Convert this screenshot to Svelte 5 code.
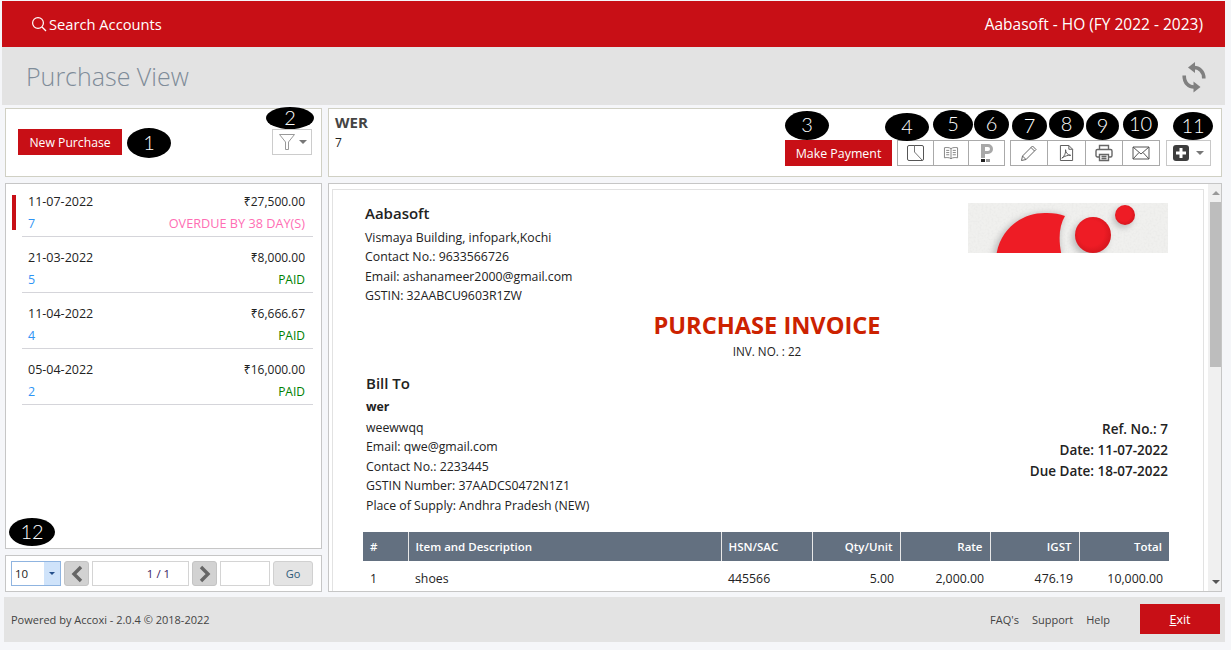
<script>
  const purchases = [
    { date: '11-07-2022', amount: '₹27,500.00', no: '7', status: 'OVERDUE BY 38 DAY(S)', kind: 'overdue', active: true },
    { date: '21-03-2022', amount: '₹8,000.00', no: '5', status: 'PAID', kind: 'paid' },
    { date: '11-04-2022', amount: '₹6,666.67', no: '4', status: 'PAID', kind: 'paid' },
    { date: '05-04-2022', amount: '₹16,000.00', no: '2', status: 'PAID', kind: 'paid' }
  ];
</script>

<div class="page">
  <header class="topbar">
    <div class="search">
      <svg width="16" height="16" viewBox="0 0 16 16" fill="none" stroke="#fff" stroke-width="1.2"><circle cx="7" cy="7" r="5.4" /><path d="M11 11l4 4" /></svg>
      <span>Search Accounts</span>
    </div>
    <div class="company">Aabasoft - HO (FY 2022 - 2023)</div>
  </header>

  <div class="titlebar">
    <h1>Purchase View</h1>
    <svg width="24" height="34" viewBox="0 0 24 34" fill="none">
      <path d="M11 8.500C17 8 22 12.500 21.800 19.500" stroke="#808080" stroke-width="3.600" />
      <path d="M6 8.500l7-5.500v11z" fill="#808080" />
      <path d="M13 28C7 28.500 2 24 2.200 16.500" stroke="#808080" stroke-width="3.600" />
      <path d="M18.500 28l-7-5.500v11z" fill="#808080" />
    </svg>
  </div>

  <div class="workspace">
    <aside class="side">
      <section class="panel side-top">
        <button class="red new-btn">New Purchase</button>
        <span class="mark m1">1</span>
        <span class="mark m2">2</span>
        <button class="filter">
          <svg width="18" height="18" viewBox="0 0 18 18" fill="none" stroke="#999"><path d="M1.500 1.500h15L10.500 9v7.500h-3V9z" /></svg>
          <i class="caret"></i>
        </button>
      </section>

      <section class="panel list">
        {#each purchases as p, i}
          <div class="row" class:first={i === 0} class:active={p.active}>
            <div class="line"><span class="date">{p.date}</span><span>{p.amount}</span></div>
            <div class="line"><span class="no">{p.no}</span><span class={p.kind}>{p.status}</span></div>
          </div>
        {/each}
        <span class="mark m12">12</span>
      </section>

      <section class="panel pager">
        <div class="size"><span>10</span><b><i class="caret small"></i></b></div>
        <button class="nav"><svg width="14" height="18" viewBox="0 0 14 18" fill="none" stroke="#666" stroke-width="3.400"><path d="M11 2L4 9l7 7" /></svg></button>
        <div class="count">1 / 1</div>
        <button class="nav"><svg width="14" height="18" viewBox="0 0 14 18" fill="none" stroke="#666" stroke-width="3.400"><path d="M3 2l7 7-7 7" /></svg></button>
        <div class="jump"></div>
        <button class="go">Go</button>
      </section>
    </aside>

    <main class="content">
      <section class="panel head">
        <div class="vendor">
          <strong>WER</strong>
          <span>7</span>
        </div>
        <div class="tools">
          <div class="tool-wrap"><span class="mark m3">3</span><button class="red pay">Make Payment</button></div>
          <div class="group g1">
            <span class="mark m4">4</span><span class="mark m5">5</span><span class="mark m6">6</span>
            <button><svg width="17" height="16" viewBox="0 0 17 16" fill="none" stroke="#555"><rect x=".5" y=".5" width="16" height="15" rx="1.500" /><path d="M7.500 .5v6.500l7.500 8" stroke="#777" /></svg></button>
            <button><svg width="16" height="14" viewBox="0 0 18 16" fill="none" stroke="#777"><path d="M9 3C7 1.500 4 1.500 1.500 2v11.500c2.500-.5 5.500-.5 7.500 1 2-1.500 5-1.500 7.500-1V2C14 1.500 11 1.500 9 3zM9 3v11.500M3.500 5h3.500M3.500 7.500h3.500M3.500 10h3.500M11 5h3.500M11 7.500h3.500M11 10h3.500" /></svg></button>
            <button><svg width="14" height="20" viewBox="0 0 14 20"><path d="M1 1h7a4.500 4.500 0 0 1 0 10H5v4H1zM5 4v4h3a2 2 0 0 0 0-4z" fill="#a8a8a8" fill-rule="evenodd" /><path d="M1 16h4v3H1z" fill="#222" /><path d="M6 16h4v3H6z" fill="#999" /></svg></button>
          </div>
          <div class="group g2">
            <span class="mark m7">7</span><span class="mark m8">8</span><span class="mark m9">9</span><span class="mark m10">10</span>
            <button><svg width="18" height="18" viewBox="0 0 18 18" fill="none" stroke="#666"><path d="M1.500 16.500l1-4.500L12.500 2l3.500 3.500L6 15.500zM2.500 12l3.500 3.500M11 3.500l3.500 3.500" /></svg></button>
            <button><svg width="15" height="18" viewBox="0 0 16 18" fill="none" stroke="#555"><path d="M1.500 1h9l4 4v12h-13zM10.500 1v4h4" /><path d="M3 14.500C6 12.500 7.500 8.500 7 5.500c0 3 2 5.500 5.500 6-3-.3-6 .5-9.500 3z" /></svg></button>
            <button><svg width="18" height="18" viewBox="0 0 18 18" fill="none" stroke="#666" stroke-width="1.400"><path d="M4.500 5.500V1.500h9v4M4.500 13H2.500A1.500 1.500 0 0 1 1 11.500V7a1.500 1.500 0 0 1 1.500-1.500h13A1.500 1.500 0 0 1 17 7v4.500a1.500 1.500 0 0 1-1.500 1.500h-2" /><path d="M4.500 10.500h9v6h-9zM6.500 12.500h5M6.500 14.500h5" /></svg></button>
            <button><svg width="18" height="14" viewBox="0 0 18 14" fill="none" stroke="#555"><path d="M1 1h16v12H1zM1 1l8 7 8-7M1 13l6-6.500M17 13l-6-6.500" /></svg></button>
          </div>
          <button class="more">
            <span class="mark m11">11</span>
            <svg width="16" height="16" viewBox="0 0 16 16"><rect width="16" height="16" rx="3" fill="#3d3d3d" /><path d="M6.500 3h3v3.500H13v3H9.500V13h-3V9.500H3v-3h3.500z" fill="#fff" /></svg>
            <i class="caret"></i>
          </button>
        </div>
      </section>

      <section class="panel viewer">
        <article class="sheet">
          <div class="seller">
            <div>
              <h2>Aabasoft</h2>
              <p>Vismaya Building, infopark,Kochi</p>
              <p>Contact No.: 9633566726</p>
              <p>Email: ashanameer2000@gmail.com</p>
              <p>GSTIN: 32AABCU9603R1ZW</p>
            </div>
            <svg class="logo" width="200" height="50" viewBox="0 0 200 50">
              <defs>
                <radialGradient id="ball" cx="0.45" cy="0.45" r="0.55"><stop offset="0.65" stop-color="#ee1c25" /><stop offset="1" stop-color="#d8161e" /></radialGradient>
                <filter id="paper" x="0" y="0" width="1" height="1">
                  <feTurbulence type="fractalNoise" baseFrequency="0.5" numOctaves="2" seed="4" />
                  <feColorMatrix values="0 0 0 0 0.6  0 0 0 0 0.6  0 0 0 0 0.6  0 0 0 0.35 -0.14" />
                </filter>
                <filter id="soft" x="-30%" y="-30%" width="160%" height="160%"><feGaussianBlur stdDeviation="3" /></filter>
                <clipPath id="logo-box"><rect width="200" height="50" /></clipPath>
              </defs>
              <g clip-path="url(#logo-box)">
                <rect width="200" height="50" fill="#f0f0ee" />
                <rect width="200" height="50" filter="url(#paper)" />
                <circle cx="122" cy="35" r="18" fill="#bbb" filter="url(#soft)" />
                <circle cx="155" cy="15" r="10" fill="#bbb" filter="url(#soft)" />
                <path d="M25 54C29 24 56 9 79 10c7 0 13 1 18 3-6 10-7 24-3 41z" fill="#bbb" filter="url(#soft)" />
                <path d="M28 54C32 24 56 9 79 10c7 0 13 1 18 3-6 10-7 24-3 41z" fill="#ee1c25" />
                <circle cx="125" cy="32" r="18" fill="url(#ball)" />
                <circle cx="157" cy="12" r="10" fill="url(#ball)" />
              </g>
            </svg>
          </div>

          <div class="heading">
            <h3>PURCHASE INVOICE</h3>
            <span>INV. NO. : 22</span>
          </div>

          <div class="billing">
            <div class="bill-to">
              <h2>Bill To</h2>
              <p class="name">wer</p>
              <p>weewwqq</p>
              <p>Email: qwe@gmail.com</p>
              <p>Contact No.: 2233445</p>
              <p>GSTIN Number: 37AADCS0472N1Z1</p>
              <p>Place of Supply: Andhra Pradesh (NEW)</p>
            </div>
            <div class="refs">
              <p>Ref. No.: 7</p>
              <p>Date: 11-07-2022</p>
              <p>Due Date: 18-07-2022</p>
            </div>
          </div>

          <table>
            <thead>
              <tr><th class="c1">#</th><th class="c2">Item and Description</th><th class="c3">HSN/SAC</th><th class="num c4">Qty/Unit</th><th class="num c5">Rate</th><th class="num c6">IGST</th><th class="num c7">Total</th></tr>
            </thead>
            <tbody>
              <tr><td>1</td><td>shoes</td><td>445566</td><td class="num">5.00</td><td class="num">2,000.00</td><td class="num">476.19</td><td class="num">10,000.00</td></tr>
            </tbody>
          </table>
        </article>
        <div class="scrollbar">
          <i class="up"></i>
          <div class="track"><div class="thumb"></div></div>
          <i class="down"></i>
        </div>
      </section>
    </main>
  </div>

  <footer class="foot">
    <span class="powered">Powered by Accoxi - 2.0.4 © 2018-2022</span>
    <nav><span>FAQ's</span><span>Support</span><span>Help</span></nav>
    <button class="exit"><u>E</u>xit</button>
  </footer>
</div>

<style>
  :global(body) {
    background: #f5f6f9;
    font-family: "Open Sans", "Noto Sans", sans-serif;
  }

  .page {
    width: 1231px;
    height: 650px;
    overflow: hidden;
    padding: 1px 6px 0 2px;
    box-sizing: border-box;
    font-size: 12px;
    color: #222;
  }

  button {
    font-family: inherit;
    cursor: pointer;
  }

  .topbar {
    height: 46px;
    background: #c80f16;
    color: #fff;
    display: flex;
    align-items: center;
    justify-content: space-between;
    padding: 0 22px 0 29px;
    font-size: 14.700px;
  }

  .company { font-size: 15.500px; }

  .search {
    display: flex;
    align-items: center;
    gap: 2px;
  }

  .titlebar {
    height: 58px;
    background: #e3e3e3;
    display: flex;
    align-items: center;
    justify-content: space-between;
    padding: 0 19px 0 24px;
  }

  h1 {
    margin: 0;
    font-size: 25px;
    font-weight: 300;
    color: #7f8c99;
  }

  .workspace {
    display: flex;
    gap: 6px;
    padding: 3px 3px 0 3px;
  }

  .panel {
    position: relative;
    background: #fff;
    box-sizing: border-box;
  }

  .side {
    width: 317px;
    display: flex;
    flex-direction: column;
    gap: 6px;
  }

  .side-top {
    height: 69px;
    border: 1px solid #d0d0c4;
    display: flex;
    justify-content: space-between;
    align-items: flex-start;
    padding: 20px 9px 0 12px;
  }

  .red {
    background: #c80f16;
    color: #fff;
    border: 0;
    font-size: 12.200px;
  }

  .new-btn {
    width: 104px;
    height: 26px;
    padding: 0;
  }

  .filter {
    width: 40px;
    height: 26px;
    background: #fff;
    border: 1px solid #ccc;
    display: flex;
    align-items: center;
    justify-content: center;
    gap: 3px;
    padding: 0;
  }

  .caret {
    display: inline-block;
    border-left: 4px solid transparent;
    border-right: 4px solid transparent;
    border-top: 4px solid #777;
  }

  .caret.small {
    border-width: 3px 3px 0;
    border-top-color: #24508c;
  }

  .mark {
    position: absolute;
    background: #000;
    color: #fff;
    border-radius: 50%;
    font-family: Lato, sans-serif;
    font-size: 20px;
    font-weight: 300;
    line-height: 1;
    display: flex;
    align-items: center;
    justify-content: center;
    padding-bottom: 3px;
    box-sizing: border-box;
    z-index: 2;
  }

  .m1 { left: 121px; top: 19px; width: 44px; height: 30px; }
  .m2 { left: 260px; top: -2px; width: 48px; height: 22px; }
  .m3 { left: 0; top: -29px; width: 44px; height: 29px; }
  .m4 { left: -13px; top: -28px; width: 44px; height: 28px; }
  .m5 { left: 35px; top: -31px; width: 40px; height: 29px; }
  .m6 { left: 76px; top: -31px; width: 35px; height: 29px; }
  .m7 { left: 1px; top: -29px; width: 35px; height: 28px; }
  .m8 { left: 38px; top: -31px; width: 35px; height: 28px; }
  .m9 { left: 75px; top: -29px; width: 33px; height: 28px; }
  .m10 { left: 112px; top: -31px; width: 35px; height: 29px; }
  .m11 { left: 6px; top: -29px; width: 40px; height: 28px; }
  .m12 { left: 3px; top: 334px; width: 46px; height: 28px; }

  .list {
    height: 366px;
    border: 1px solid #c6c6c6;
    padding: 0 8px 0 16px;
  }

  .row {
    position: relative;
    height: 56px;
    box-sizing: border-box;
    padding: 9px 8px 0 6px;
    border-bottom: 1px solid #d5d5da;
  }

  .row.first {
    height: 53px;
    padding-top: 6px;
  }

  .row.active::before {
    content: "";
    position: absolute;
    left: -10px;
    top: 11px;
    width: 4px;
    height: 35px;
    background: #c80f16;
  }

  .line {
    display: flex;
    justify-content: space-between;
    align-items: center;
    height: 22px;
  }

  .date { font-size: 12.500px; }
  .no { color: #2f94f5; font-size: 12.500px; }
  .overdue { color: #ff6eb4; font-size: 12.700px; }
  .paid { color: #008000; }

  .pager {
    height: 37px;
    border: 1px solid #c6c6c6;
    display: flex;
    align-items: center;
    gap: 3px;
    padding: 0 7px 0 5px;
  }

  .size {
    width: 50px;
    height: 25px;
    border: 1px solid #8fb4e0;
    box-sizing: border-box;
    display: flex;
    justify-content: space-between;
    align-items: center;
    padding-left: 3px;
    font-size: 11.500px;
  }

  .size b {
    width: 16px;
    height: 23px;
    background: #cfe3fa;
    display: flex;
    align-items: center;
    justify-content: center;
  }

  .nav {
    width: 25px;
    height: 25px;
    padding: 0;
    background: #d2d2d2;
    border: 1px solid #c4c4c4;
    border-radius: 3px;
    display: flex;
    align-items: center;
    justify-content: center;
  }

  .count, .jump {
    height: 25px;
    box-sizing: border-box;
    border: 1px solid #d4d4d4;
    background: #fff;
  }

  .count {
    width: 97px;
    line-height: 24px;
    text-align: center;
    padding-left: 36px;
    font-size: 11.500px;
    color: #3c1a60;
  }

  .jump { width: 50px; }

  .go {
    width: 40px;
    height: 25px;
    padding: 0;
    background: #e4e4e4;
    border: 1px solid #d0d0d0;
    border-radius: 3px;
    color: #2c5a78;
    font-size: 11px;
  }

  .content {
    width: 894px;
    display: flex;
    flex-direction: column;
    gap: 6px;
  }

  .head {
    height: 69px;
    border: 1px solid #d0d0c4;
    display: flex;
    justify-content: space-between;
    padding: 3px 10px 0 6px;
  }

  .vendor {
    display: flex;
    flex-direction: column;
    gap: 2px;
  }

  .vendor strong {
    font-size: 15px;
    color: #444;
  }

  .tools {
    display: flex;
    align-items: flex-start;
    padding-top: 28px;
  }

  .tool-wrap { position: relative; margin-right: 5px; }

  .pay {
    width: 107px;
    height: 26px;
    padding: 0;
    font-size: 12.400px;
    display: block;
  }

  .group {
    position: relative;
    display: flex;
    height: 26px;
    border: 1px solid #aaa;
    box-sizing: border-box;
    margin-right: 5px;
  }

  .group button {
    height: 24px;
    padding: 0;
    background: #fff;
    border: 0;
    border-right: 1px solid #aaa;
    display: flex;
    align-items: center;
    justify-content: center;
  }

  .group button:last-of-type { border-right: 0; }
  .g1 { width: 108px; }
  .g1 button { flex: 1; }
  .g2 { width: 150px; }
  .g2 button { flex: 1; }

  .more {
    position: relative;
    width: 45px;
    height: 26px;
    padding: 0;
    background: #fff;
    border: 1px solid #c8c8c8;
    display: flex;
    align-items: center;
    justify-content: center;
    gap: 7px;
    margin-left: 1px;
  }

  .viewer {
    height: 409px;
    border: 1px solid #c6c6c6;
    display: flex;
    overflow: hidden;
    padding: 5px 0 0 3px;
    gap: 4px;
  }

  .sheet {
    flex: 1;
    height: 600px;
    box-sizing: border-box;
    border: 1px solid #e2e2e2;
    padding: 14px 34px 0 32px;
    font-size: 12.300px;
  }

  .sheet p { margin: 0; line-height: 19.400px; }

  .sheet h2 {
    margin: 0 0 3px;
    font-size: 15px;
    font-weight: 600;
    line-height: 20px;
  }

  .seller h2 { margin: -1px 0 5px; }

  .seller {
    display: flex;
    justify-content: space-between;
    align-items: flex-start;
  }

  .logo { margin: -1px 1px 0 0; }

  .heading {
    text-align: center;
    margin-top: 4px;
  }

  .heading h3 {
    margin: 0;
    font-size: 23.600px;
    line-height: 30px;
    font-weight: 700;
    color: #cc2200;
  }

  .heading span {
    display: block;
    margin-top: 4px;
    font-size: 11.700px;
    line-height: 14px;
  }

  .billing {
    display: flex;
    justify-content: space-between;
    margin-top: 15px;
    padding-left: 1px;
  }

  .sheet .name {
    font-weight: 700;
    line-height: 22.400px;
  }

  .refs {
    text-align: right;
    font-weight: 600;
    font-size: 13.500px;
    padding: 46px 1px 0 0;
  }

  .sheet .refs p { line-height: 21px; }

  table {
    width: 806px;
    margin: 17px 0 0 -2px;
    border-collapse: collapse;
    table-layout: fixed;
  }

  th {
    background: #637080;
    color: #fff;
    font-size: 11.500px;
    font-weight: 600;
    height: 29px;
    text-align: left;
    padding: 0 7px;
    border-right: 1px solid #e8e8e8;
    box-sizing: border-box;
  }

  th:last-child { border-right: 0; }
  td { height: 34px; padding: 0 6px 0 7px; }
  .num { text-align: right; }
  .c1 { width: 45px; }
  .c2 { width: 313px; }
  .c3 { width: 91px; }
  .c4 { width: 88px; }
  .c5 { width: 90px; }
  .c6 { width: 89px; }
  .c7 { width: 90px; }

  .scrollbar {
    width: 16px;
    margin: -5px 1px 0 0;
    height: 407px;
    flex: none;
    background: #f0f0f0;
    display: flex;
    flex-direction: column;
    align-items: center;
  }

  .up, .down {
    display: block;
    height: 0;
    margin: 7px 0;
    border-left: 4px solid transparent;
    border-right: 4px solid transparent;
  }

  .up { border-bottom: 4px solid #999; }
  .down { border-top: 4px solid #555; }

  .track { flex: 1; width: 100%; }

  .thumb {
    height: 165px;
    width: 13px;
    margin: 0 auto;
    background: #bdbdbd;
  }

  .foot {
    height: 45px;
    margin: 5px 0 0 2px;
    background: #e3e3e3;
    display: flex;
    align-items: center;
    padding: 0 5px 0 7px;
    font-size: 11px;
    color: #444;
  }

  .powered { flex: 1; }

  .foot nav {
    display: flex;
    gap: 13px;
    margin-right: 30px;
  }

  .exit {
    width: 80px;
    height: 30px;
    margin-bottom: 1px;
    background: #c80f16;
    border: 0;
    color: #fff;
    font-size: 12.500px;
    padding: 0;
  }
</style>
